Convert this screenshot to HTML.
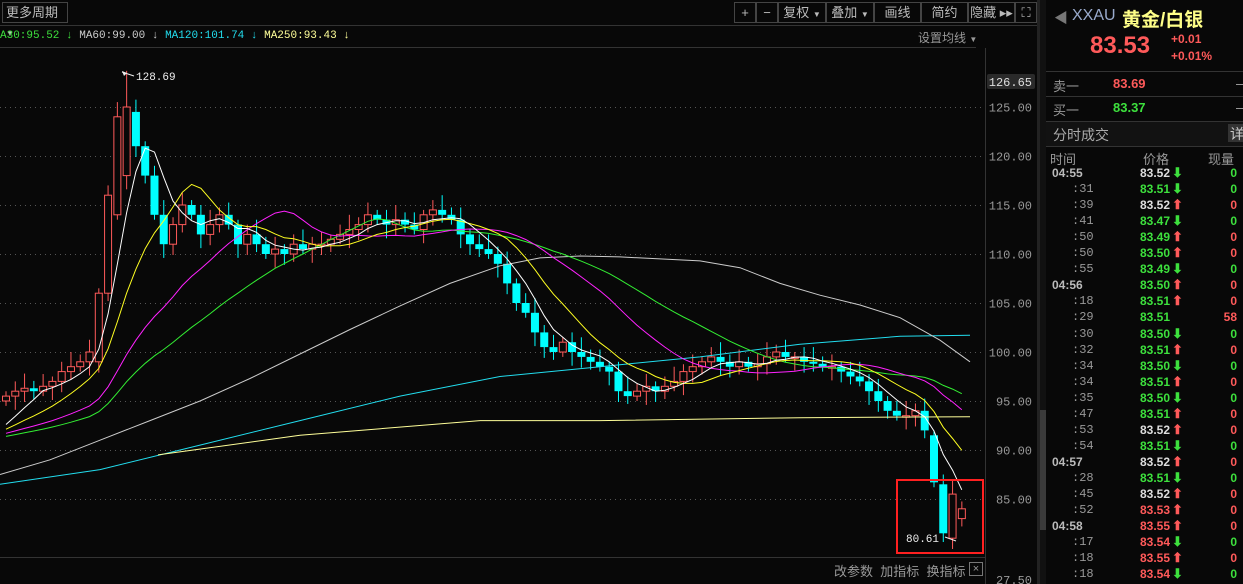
<!DOCTYPE html>
<html><head><meta charset="utf-8"><style>
*{margin:0;padding:0;box-sizing:border-box}
body{width:1243px;height:584px;background:#080808;overflow:hidden;font-family:"Liberation Sans","Noto Sans CJK SC",sans-serif;position:relative;color:#ccc}
.a{position:absolute;white-space:nowrap}
.mono{font-family:"Liberation Mono","Noto Sans CJK SC",monospace}
.btn{position:absolute;top:2px;height:21px;border:1px solid #444;font-size:13px;color:#bbb;text-align:center;line-height:19px}
.row{position:absolute;left:1046px;width:197px;height:16px;font-size:12px;font-weight:bold;font-family:"Liberation Sans",sans-serif}
.row .t{position:absolute;left:6px}
.row .ts{position:absolute;left:26px;color:#999;font-weight:normal;font-family:"Liberation Mono",monospace}
.row .p{position:absolute;right:73px}
.row .ar{position:absolute;left:126px;font-size:13px;font-weight:bold;top:-1px}
.row .v{position:absolute;right:6px}
.g{color:#3de03d}.r{color:#ff5a5a}.w{color:#ddd}
</style></head><body>
<div class="a" style="left:987px;top:74px;width:48px;height:15px;background:#2a2a2a;border-radius:2px"></div>
<svg id="ch" class="a" style="left:0;top:0" width="1040" height="584"></svg>
<div class="btn" style="left:2px;width:66px;text-align:left;padding-left:3px">更多周期 <span style="font-size:8px">▼</span></div>
<div class="a" style="left:0;top:25px;width:1040px;height:1px;background:#333"></div>
<div class="a mono" style="left:0;top:30px;font-size:11px"><span style="color:#3de03d">A30:95.52 ↓</span> <span style="color:#ccc">MA60:99.00 ↓</span> <span style="color:#22ddee">MA120:101.74 ↓</span> <span style="color:#ffff99">MA250:93.43 ↓</span></div>
<div class="a" style="left:918px;top:29px;font-size:12px;color:#999">设置均线 <span style="font-size:8px">▼</span></div>
<div class="a" style="left:0;top:47px;width:976px;height:1px;background:#333"></div>
<div class="btn" style="left:734px;width:22px">+</div>
<div class="btn" style="left:756px;width:22px">−</div>
<div class="btn" style="left:778px;width:48px">复权 <span style="font-size:8px">▼</span></div>
<div class="btn" style="left:826px;width:48px">叠加 <span style="font-size:8px">▼</span></div>
<div class="btn" style="left:874px;width:47px">画线</div>
<div class="btn" style="left:921px;width:47px">简约</div>
<div class="btn" style="left:968px;width:47px">隐藏 ▸▸</div>
<div class="btn" style="left:1015px;width:22px">⛶</div>
<div class="a" style="left:985px;top:48px;width:1px;height:536px;background:#333"></div>
<div class="a" style="left:1037px;top:0;width:3px;height:584px;background:#222"></div>
<div class="a" style="left:1040px;top:0;width:6px;height:584px;background:#111"></div>
<div class="a" style="left:1040px;top:410px;width:6px;height:120px;background:#3a3a3a"></div>
<div class="a" style="left:0;top:557px;width:985px;height:1px;background:#333"></div>
<div class="a" style="left:834px;top:561px;font-size:13px;color:#999">改参数 &nbsp;加指标 &nbsp;换指标</div>
<div class="a" style="left:969px;top:562px;width:14px;height:14px;border:1px solid #777;color:#999;font-size:11px;line-height:12px;text-align:center">×</div>
<div class="a" style="left:896px;top:479px;width:88px;height:75px;border:2px solid #ff2020"></div>
<!-- right panel -->
<div class="a" style="left:1054px;top:8px;font-size:14px;color:#777">◀</div>
<div class="a" style="left:1072px;top:7px;font-size:16px;color:#99aacc">XXAU</div>
<div class="a" style="left:1122px;top:5px;font-size:19px;font-weight:bold;color:#ffff88">黄金/白银</div>
<div class="a" style="left:1090px;top:32px;font-size:24px;font-weight:bold;color:#ff5a5a">83.53</div>
<div class="a" style="left:1171px;top:32px;font-size:12px;font-weight:bold;color:#ff5a5a">+0.01</div>
<div class="a" style="left:1171px;top:49px;font-size:12px;font-weight:bold;color:#ff5a5a">+0.01%</div>
<div class="a" style="left:1046px;top:71px;width:197px;height:1px;background:#333"></div>
<div class="a" style="left:1053px;top:76px;font-size:13px;color:#999">卖一</div>
<div class="a" style="left:1113px;top:76px;font-size:13px;font-weight:bold;color:#ff5a5a">83.69</div>
<div class="a" style="left:1236px;top:76px;font-size:13px;color:#aaa">–</div>
<div class="a" style="left:1046px;top:96px;width:197px;height:1px;background:#333"></div>
<div class="a" style="left:1053px;top:100px;font-size:13px;color:#999">买一</div>
<div class="a" style="left:1113px;top:100px;font-size:13px;font-weight:bold;color:#3de03d">83.37</div>
<div class="a" style="left:1236px;top:100px;font-size:13px;color:#aaa">–</div>
<div class="a" style="left:1046px;top:121px;width:197px;height:26px;background:#121212;border-top:1px solid #333;border-bottom:1px solid #333"></div>
<div class="a" style="left:1053px;top:125px;font-size:14px;color:#aaa">分时成交</div>
<div class="a" style="left:1228px;top:124px;width:15px;height:18px;background:#333;font-size:14px;color:#ccc;padding-left:2px">详</div>
<div class="a" style="left:1050px;top:149px;font-size:13px;color:#999">时间</div>
<div class="a" style="left:1143px;top:149px;font-size:13px;color:#999">价格</div>
<div class="a" style="left:1208px;top:149px;font-size:13px;color:#999">现量</div>
<div id="rows"></div>
<script>
var svg=document.getElementById('ch'),h='';
function Y(p){return 107+(125-p)*9.8}
[125,120,115,110,105,100,95,90,85].forEach(function(p){var y=Math.round(Y(p))+.5;h+='<line x1="0" x2="985" y1="'+y+'" y2="'+y+'" stroke="#555" stroke-dasharray="1,4"/>';h+='<text x="1032" y="'+(y+4)+'" fill="#999" font-size="12" text-anchor="end" font-family="Liberation Mono">'+p.toFixed(2)+'</text>'});
h+='<text x="1032" y="86" fill="#ddd" font-size="12" text-anchor="end" font-family="Liberation Mono">126.65</text>';
h+='<text x="1032" y="584" fill="#999" font-size="12" text-anchor="end" font-family="Liberation Mono">27.50</text>';
var c=[95.5,96,96.3,96,96.5,97,98,98.5,99,100,104,112,119,123,121,118,114,111,113,115,114,112,113,114,113,111,112,111,110,110.5,110,111,110.5,111,111,111.5,112,112.5,113,114,113.5,113,113.5,113,112.5,114,114.5,114,113.5,112,111,110.5,110,109,107,105,104,102,100.5,100,101,100,99.5,99,98.5,98,96,95.5,96,96.5,96,96.5,97,98,98.5,99,99.5,99,98.5,99,98.5,98.8,99.5,100,99.5,99.5,99,98.8,98.5,98.5,98,97.5,97,96,95,94,93.5,93.5,94,92,87,81,83,84];
var o=[95];for(var i=1;i<c.length;i++)o.push(c[i-1]);
o[10]=99;c[10]=106;o[11]=106;c[11]=116;o[12]=114;c[12]=124;o[13]=118;c[13]=125;o[14]=124.5;c[14]=121;o[100]=91.5;c[100]=86.7;o[101]=86.5;c[101]=81.5;o[102]=81;c[102]=85.5;o[103]=83;c[103]=84;
function X(i){return 6+i*9.28}
for(var i=0;i<c.length;i++){var x=X(i),up=c[i]>=o[i],hi=Math.max(o[i],c[i])+0.5+((i*7)%5)*0.25,lo=Math.min(o[i],c[i])-0.5-((i*3)%4)*0.3;if(i==13)hi=128.69;if(i==101)lo=80.61;
var col=up?'#ff5a5a':'#00ffff',t=Y(Math.max(o[i],c[i])),b=Y(Math.min(o[i],c[i]));if(b-t<1.5)b=t+1.5;
h+='<line x1="'+x+'" x2="'+x+'" y1="'+Y(hi)+'" y2="'+Y(lo)+'" stroke="'+col+'"/>';
if(up)h+='<rect x="'+(x-3.5)+'" y="'+t+'" width="7" height="'+(b-t)+'" fill="#080808" stroke="'+col+'"/>';
else h+='<rect x="'+(x-4)+'" y="'+t+'" width="8" height="'+(b-t)+'" fill="'+col+'"/>';}
function ma(n,col){var pts=[];for(var i=0;i<c.length;i++){var s=0;for(var k=0;k<n;k++){var j=i-k;s+=j>=0?c[j]:92-(-j)*0.05}pts.push(X(i).toFixed(1)+','+Y(s/n).toFixed(1))}h+='<polyline points="'+pts.join(' ')+'" fill="none" stroke="'+col+'" stroke-width="1"/>'}
function pl(a,col){var s=[];for(var i=0;i<a.length;i+=2)s.push(a[i]+','+Y(a[i+1]).toFixed(1));h+='<polyline points="'+s.join(' ')+'" fill="none" stroke="'+col+'"/>'}
pl([0,86.5,100,88,200,90.5,300,93,400,95.5,500,97.5,600,98.5,700,99.5,800,100.8,900,101.6,970,101.7],'#22ddee');
pl([158,89.5,300,91.5,480,93,600,93,800,93.3,970,93.4],'#ffff99');
pl([0,87.5,50,89,100,91,150,93,200,95,250,97.3,300,99.8,350,102.3,400,104.7,450,107,500,108.8,540,109.6,580,109.8,620,109.7,660,109.5,700,109.3,740,108.6,780,107,820,105.8,860,104.8,900,103.5,940,101.2,970,99],'#cccccc');
ma(30,'#33ee33');ma(20,'#ff22ff');ma(10,'#ffff22');ma(5,'#ffffff');
h+='<text x="136" y="80" fill="#eee" font-size="11" font-family="Liberation Mono">128.69</text><path d="M122 72 L134 76" stroke="#eee"/><path d="M122 71 l5 2 -3 3z" fill="#eee"/>';
h+='<text x="906" y="542" fill="#eee" font-size="11" font-family="Liberation Mono">80.61</text><path d="M945 537 L956 541" stroke="#eee"/>';
svg.innerHTML=h;
var rows=[["04:55","83.52","w","d","0"],[":31","83.51","g","d","0"],[":39","83.52","w","u","0"],[":41","83.47","g","d","0"],[":50","83.49","g","u","0"],[":50","83.50","g","u","0"],[":55","83.49","g","d","0"],["04:56","83.50","g","u","0"],[":18","83.51","g","u","0"],[":29","83.51","g","","58"],[":30","83.50","g","d","0"],[":32","83.51","g","u","0"],[":34","83.50","g","d","0"],[":34","83.51","g","u","0"],[":35","83.50","g","d","0"],[":47","83.51","g","u","0"],[":53","83.52","w","u","0"],[":54","83.51","g","d","0"],["04:57","83.52","w","u","0"],[":28","83.51","g","d","0"],[":45","83.52","w","u","0"],[":52","83.53","r","u","0"],["04:58","83.55","r","u","0"],[":17","83.54","r","d","0"],[":18","83.55","r","u","0"],[":18","83.54","r","d","0"]];
var s='';rows.forEach(function(r,i){var y=166+i*16.05;var vc=r[3]=='d'?'g':'r';
s+='<div class="row" style="top:'+y+'px">'+(r[0].length>3?'<span class="t" style="color:#bbb">'+r[0]+'</span>':'<span class="ts">'+r[0]+'</span>')+'<span class="p '+r[2]+'">'+r[1]+'</span>'+(r[3]?'<span class="ar '+(r[3]=='d'?'g':'r')+'">'+(r[3]=='d'?'⬇':'⬆')+'</span>':'')+'<span class="v '+vc+'">'+r[4]+'</span></div>'});
document.getElementById('rows').innerHTML=s;
</script>
</body></html>
